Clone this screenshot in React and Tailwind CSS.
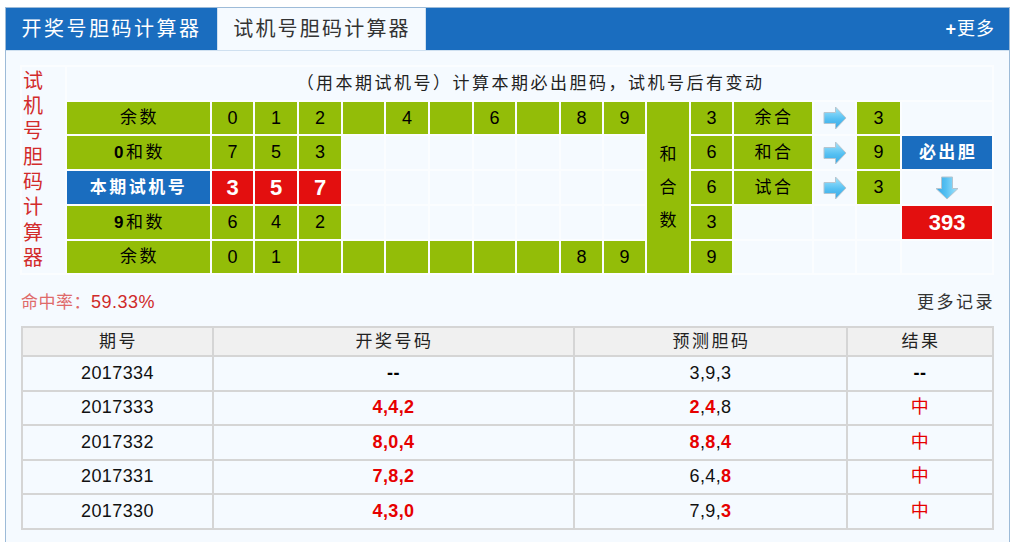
import { useId } from 'react';

const colWidths = ['w-[45px]', 'w-[145px]', 'w-[43px]', 'w-[44px]', 'w-[44px]', 'w-[43px]', 'w-[44px]', 'w-[44px]', 'w-[43px]', 'w-[44px]', 'w-[43px]', 'w-[43px]', 'w-[44px]', 'w-[43px]', 'w-[80px]', 'w-[43px]', 'w-[45px]', 'w-[92px]'];

const cjk = "font-['Liberation_Sans','Noto_Sans_CJK_SC',sans-serif]";
const cell = 'border-2 border-[#fbfdff] p-0 text-center align-middle';
const green = `${cell} bg-[#93bd08] text-black`;
const empty = cell;
const line = 'border-2 border-[#d5d5d5] p-0';

const records = [
  { issue: '2017334', open: [['--', false]], guess: [['3,9,3', false]], result: '--' },
  { issue: '2017333', open: [['4,4,2', true]], guess: [['2', true], [',', false], ['4', true], [',8', false]], result: '中' },
  { issue: '2017332', open: [['8,0,4', true]], guess: [['8', true], [',', false], ['8', true], [',', false], ['4', true]], result: '中' },
  { issue: '2017331', open: [['7,8,2', true]], guess: [['6,4,', false], ['8', true]], result: '中' },
  { issue: '2017330', open: [['4,3,0', true]], guess: [['7,9,', false], ['3', true]], result: '中' },
];

function Arrow({ down = false }) {
  const id = useId();
  return (
    <svg width="24" height="24" viewBox="0 0 24 24" className="mx-auto block">
      <defs>
        <linearGradient id={id} x1="0" y1="0" x2="0" y2="1">
          <stop offset="0" stopColor="#a5e4fc" />
          <stop offset="0.55" stopColor="#55c0f2" />
          <stop offset="1" stopColor="#38a8e6" />
        </linearGradient>
      </defs>
      <path
        d="M1 6.5H12.5V1L23 12 12.5 23V17.5H1Z"
        transform={down ? 'rotate(90 12 12)' : undefined}
        fill={`url(#${id})`}
        stroke="#b5c5cf"
        strokeWidth="1"
      />
    </svg>
  );
}

function Label({ children }) {
  return <td className={`${green} pl-[2px] text-[17px] tracking-[2.5px]`}>{children}</td>;
}

function Nums({ items }) {
  return items.map((n, i) => (
    <td key={i} className={`${green} text-[18px]`}>{n}</td>
  ));
}

function Blanks({ count }) {
  return Array.from({ length: count }, (_, i) => <td key={i} className={empty} />);
}

function Cells({ parts }) {
  return parts.map(([text, hit], i) => (
    <span key={i} className={hit ? 'font-bold text-[#e60000]' : text === '--' ? 'font-bold text-black' : ''}>{text}</span>
  ));
}

export default function App() {
  return (
    <div className={`h-[542px] overflow-hidden bg-white pl-[5px] pt-[7px] ${cjk}`}>
      <div className="h-[600px] w-[1005px] border border-[#9dbbd8] bg-[#f5faff]">
        <div className="flex h-[43px] border-b border-[#cfe0f0] bg-[#1a6dbf]">
          <div className="flex w-[211px] items-center justify-center text-[20px] tracking-[2.5px] text-white">开奖号胆码计算器</div>
          <div className="flex w-[209px] items-center justify-center border-x border-[#cfe0f0] bg-[#f5faff] pl-[1px] text-[20px] tracking-[2.2px] text-[#333]">试机号胆码计算器</div>
          <div className="ml-auto flex items-center pr-[14px] text-[18px] tracking-[1px] text-white">
            <span className="font-bold">+</span>更多
          </div>
        </div>

        <div className="pl-[14px] pt-[14px]">
          <table className="w-[972px] table-fixed border-collapse">
            <colgroup>
              {colWidths.map((w, i) => <col key={i} className={w} />)}
            </colgroup>
            <tbody className="text-[#111]">
              <tr className="h-[35px]">
                <td rowSpan={6} className={`${cell} text-[20px] leading-[25.3px] text-[#d22b2b]`}>
                  <div className="flex flex-col items-start pl-[1px]">
                    {'试机号胆码计算器'.split('').map((c, i) => <span key={i}>{c}</span>)}
                  </div>
                </td>
                <td colSpan={17} className={`${cell} pl-[2px] text-[17px] tracking-[2.5px] text-[#222]`}>（用本期试机号）计算本期必出胆码，试机号后有变动</td>
              </tr>
              <tr className="h-[34px]">
                <Label>余数</Label>
                <Nums items={['0', '1', '2', '', '4', '', '6', '', '8', '9']} />
                <td rowSpan={5} className={`${green} text-[17px] leading-[33px]`}>和<br />合<br />数</td>
                <Nums items={['3']} />
                <Label>余合</Label>
                <td className={empty}><Arrow /></td>
                <Nums items={['3']} />
                <Blanks count={1} />
              </tr>
              <tr className="h-[35px]">
                <Label><b>0</b>和数</Label>
                <Nums items={['7', '5', '3']} />
                <Blanks count={7} />
                <Nums items={['6']} />
                <Label>和合</Label>
                <td className={empty}><Arrow /></td>
                <Nums items={['9']} />
                <td className={`${cell} bg-[#1a6dbf] pl-[2px] text-[17px] font-bold tracking-[2.5px] text-white`}>必出胆</td>
              </tr>
              <tr className="h-[34px]">
                <td className={`${cell} bg-[#1a6dbf] text-[17px] font-bold tracking-[2.5px] text-white`}>本期试机号</td>
                {['3', '5', '7'].map((n) => (
                  <td key={n} className={`${cell} bg-[#e30f0f] text-[22px] font-bold text-white`}>{n}</td>
                ))}
                <Blanks count={7} />
                <Nums items={['6']} />
                <Label>试合</Label>
                <td className={empty}><Arrow /></td>
                <Nums items={['3']} />
                <td className={empty}><Arrow down /></td>
              </tr>
              <tr className="h-[35px]">
                <Label><b>9</b>和数</Label>
                <Nums items={['6', '4', '2']} />
                <Blanks count={7} />
                <Nums items={['3']} />
                <Blanks count={3} />
                <td className={`${cell} bg-[#e30f0f] text-[22px] font-bold text-white`}>393</td>
              </tr>
              <tr className="h-[34px]">
                <Label>余数</Label>
                <Nums items={['0', '1', '', '', '', '', '', '', '8', '9']} />
                <Nums items={['9']} />
                <Blanks count={4} />
              </tr>
            </tbody>
          </table>

          <div className="mt-[15px] flex w-[975px] items-center justify-between pl-[1px] text-[18px] leading-[24px]">
            <div className="tracking-[0.5px] text-[#cf2a2a]">
              <span className="text-[17px] text-[#df6a6a]">命中率：</span>59.33%
            </div>
            <div className="text-[17px] tracking-[2.5px] text-[#333]">更多记录</div>
          </div>

          <table className="ml-[1px] mt-[11px] w-[971px] table-fixed border-collapse border-2 border-[#d5d5d5] text-[18px] tracking-[0.4px] text-[#111]">
            <colgroup>
              <col className="w-[191px]" />
              <col className="w-[361px]" />
              <col className="w-[273px]" />
              <col className="w-[146px]" />
            </colgroup>
            <thead>
              <tr className="h-[29px] bg-[#f0f0f0] text-[17px] tracking-[2.5px] text-[#222]">
                {['期号', '开奖号码', '预测胆码', '结果'].map((h) => (
                  <th key={h} className={`${line} pl-[2px] font-normal`}>{h}</th>
                ))}
              </tr>
            </thead>
            <tbody>
              {records.map((r) => (
                <tr key={r.issue} className="h-[34.5px] text-center">
                  <td className={line}>{r.issue}</td>
                  <td className={line}><Cells parts={r.open} /></td>
                  <td className={line}><Cells parts={r.guess} /></td>
                  <td className={`${line} ${r.result === '中' ? 'text-[#e60000]' : 'font-bold text-black'}`}>{r.result}</td>
                </tr>
              ))}
            </tbody>
          </table>
        </div>
      </div>
    </div>
  );
}
